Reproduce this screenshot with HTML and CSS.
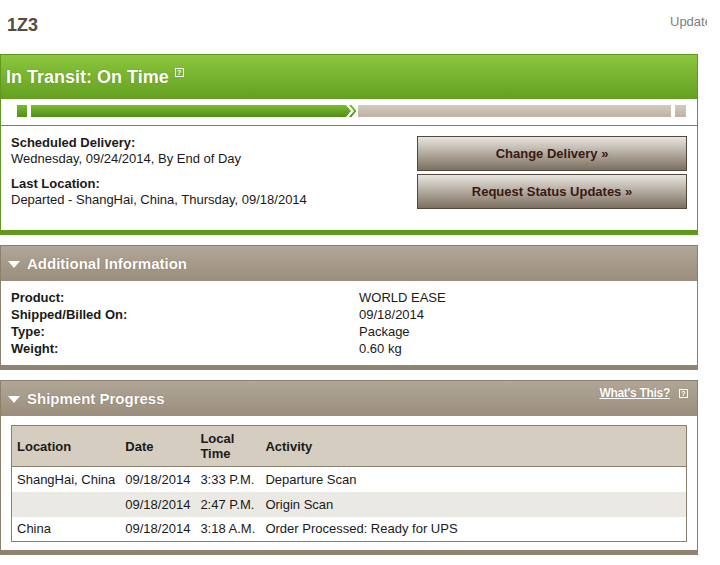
FILE: index.html
```html
<!DOCTYPE html>
<html>
<head>
<meta charset="utf-8">
<link rel="stylesheet" href="styles.css">
</head>
<body>
<div class="page">
  <div class="topbar">
    <h1 class="tracking">1Z3</h1>
    <span class="updates">Updates</span>
  </div>

  <section class="status-panel">
    <div class="status-head">
      <span class="status-title">In Transit: On Time</span>
      <span class="help help-light">?</span>
    </div>
    <div class="progress-row">
      <span class="seg seg-start"></span>
      <span class="seg seg-done"></span>
      <svg class="chev" width="16" height="16" viewBox="0 0 16 16">
        <defs>
          <linearGradient id="g" x1="0" y1="0" x2="0" y2="1">
            <stop offset="0" stop-color="#7dbd35"/>
            <stop offset="1" stop-color="#4e8e15"/>
          </linearGradient>
        </defs>
        <path d="M0 2 L3 2 L8 8 L3 14 L0 14 Z" fill="url(#g)"/>
        <path d="M5 1.5 L8.5 1.5 L14 8 L8.5 14.5 L5 14.5 L10.5 8 Z" fill="url(#g)" stroke="#fff" stroke-width="1"/>
      </svg>
      <span class="seg seg-todo"></span>
      <span class="seg seg-end"></span>
    </div>
    <div class="status-body">
      <div class="status-info">
        <div class="info-block">
          <div class="info-label">Scheduled Delivery:</div>
          <div class="info-value">Wednesday, 09/24/2014, By End of Day</div>
        </div>
        <div class="info-block">
          <div class="info-label">Last Location:</div>
          <div class="info-value">Departed - ShangHai, China, Thursday, 09/18/2014</div>
        </div>
      </div>
      <div class="actions">
        <button class="btn">Change Delivery »</button>
        <button class="btn">Request Status Updates »</button>
      </div>
    </div>
  </section>

  <section class="panel">
    <div class="panel-head">
      <span class="tri"></span>
      <span class="panel-title">Additional Information</span>
    </div>
    <div class="panel-body details">
      <div class="dl-row"><span class="dt">Product:</span><span class="dd">WORLD EASE</span></div>
      <div class="dl-row"><span class="dt">Shipped/Billed On:</span><span class="dd">09/18/2014</span></div>
      <div class="dl-row"><span class="dt">Type:</span><span class="dd">Package</span></div>
      <div class="dl-row"><span class="dt">Weight:</span><span class="dd">0.60 kg</span></div>
    </div>
  </section>

  <section class="panel">
    <div class="panel-head">
      <span class="tri"></span>
      <span class="panel-title">Shipment Progress</span>
      <span class="whats"><a href="#" class="whats-link">What's This?</a><span class="help help-sm">?</span></span>
    </div>
    <div class="panel-body progress-body">
      <table class="scan-table">
        <thead>
          <tr>
            <th class="c-loc">Location</th>
            <th class="c-date">Date</th>
            <th class="c-time">Local<br>Time</th>
            <th>Activity</th>
          </tr>
        </thead>
        <tbody>
          <tr><td>ShangHai, China</td><td>09/18/2014</td><td>3:33 P.M.</td><td>Departure Scan</td></tr>
          <tr class="alt"><td></td><td>09/18/2014</td><td>2:47 P.M.</td><td>Origin Scan</td></tr>
          <tr><td>China</td><td>09/18/2014</td><td>3:18 A.M.</td><td>Order Processed: Ready for UPS</td></tr>
        </tbody>
      </table>
    </div>
  </section>
</div>
</body>
</html>
```

FILE: styles.css
```css
* { box-sizing: border-box; }
html, body { margin: 0; padding: 0; background: #fff; }
body {
  font-family: "Liberation Sans", Arial, sans-serif;
  font-size: 13px;
  color: #1a1a1a;
  overflow: hidden;
}
.page { width: 720px; }

.topbar {
  display: flex;
  justify-content: space-between;
  align-items: flex-start;
  height: 54px;
  padding: 14px 0 0 7px;
}
.tracking {
  margin: 0;
  font-size: 18px;
  font-weight: bold;
  color: #574b40;
  line-height: 22px;
}
.updates {
  width: 37px;
  overflow: hidden;
  white-space: nowrap;
  color: #7d7d7d;
  font-size: 13px;
  margin-right: 13px;
  line-height: 16px;
}

/* Status panel */
.status-panel {
  width: 698px;
  border: 1px solid #5f9a1f;
  border-bottom: 5px solid #5f9a1f;
}
.status-head {
  height: 44px;
  background: linear-gradient(#8cc63e, #63a020);
  display: flex;
  align-items: center;
  padding-left: 5px;
  padding-top: 1px;
}
.status-title {
  color: #fff;
  font-weight: bold;
  font-size: 18px;
  text-shadow: 0 0 1px rgba(40,70,0,.5);
}
.help {
  display: inline-flex;
  align-items: center;
  justify-content: center;
  width: 9px;
  height: 9px;
  border: 1px solid #fff;
  font-size: 7px;
  line-height: 7px;
  font-weight: bold;
  color: #fff;
}
.help-light { margin-left: 6px; margin-top: -10px; }
.help-sm { margin-left: 9px; margin-top: 1px; }

.progress-row {
  height: 27px;
  border-bottom: 1px solid #5f9a1f;
  display: flex;
  align-items: flex-start;
  padding: 6px 0 0 16px;
}
.seg { height: 12px; display: block; }
.seg-start { width: 10px; background: linear-gradient(#7aba32, #4f8f15); margin-right: 4px; }
.seg-done { width: 312px; background: linear-gradient(#7dbd35, #4e8e15); }
.chev { display: block; margin-top: -2px; margin-right: -1px; }
.seg-todo { width: 313px; background: linear-gradient(#d3cabd, #bdb3a4); }
.seg-end { width: 11px; background: linear-gradient(#d3cabd, #bdb3a4); margin-left: 4px; }

.status-body {
  display: flex;
  justify-content: space-between;
  padding: 9px 10px 13px 10px;
}
.info-block { margin-bottom: 9px; }
.info-label { font-weight: bold; line-height: 16px; }
.info-value { line-height: 16px; }
.actions {
  display: flex;
  flex-direction: column;
  gap: 3px;
  padding-top: 1px;
}
.btn {
  width: 270px;
  height: 35px;
  border: 1px solid #56483a;
  background: linear-gradient(#e8e5df, #7c6f5f);
  font-family: "Liberation Sans", Arial, sans-serif;
  font-size: 13px;
  font-weight: bold;
  color: #3b1810;
  padding: 0;
}

/* Brown panels */
.panel {
  width: 698px;
  margin-top: 10px;
  border: 1px solid #8c7f6c;
  border-bottom: 5px solid #908370;
}
.panel-head {
  height: 35px;
  background: linear-gradient(#b1a797, #9a8d7b);
  display: flex;
  align-items: center;
  padding-left: 7px;
}
.tri {
  width: 0; height: 0;
  border-left: 6px solid transparent;
  border-right: 6px solid transparent;
  border-top: 7px solid #fff;
  margin-right: 7px;
  margin-top: 1px;
}
.panel-title {
  color: #fff;
  font-weight: bold;
  font-size: 15px;
  text-shadow: 0 0 1px rgba(60,40,20,.5);
}
.whats {
  margin-left: auto;
  margin-right: 9px;
  align-self: flex-start;
  margin-top: 5px;
  display: flex;
  align-items: center;
}
.whats-link {
  color: #fff;
  font-weight: bold;
  font-size: 12px;
  letter-spacing: -0.3px;
  text-decoration: underline;
  text-shadow: 0 0 1px rgba(60,40,20,.4);
}

.details { padding: 8px 10px 8px 10px; }
.dl-row { display: flex; line-height: 17px; }
.dt { width: 348px; font-weight: bold; }

.progress-body { padding: 9px 10px 8px 10px; }
.scan-table {
  width: 676px;
  border-collapse: collapse;
  border: 1px solid #8c7f6c;
}
.scan-table th {
  background: #d5cdc0;
  text-align: left;
  font-weight: bold;
  height: 41px;
  padding: 0 5px;
  line-height: 15px;
  border-bottom: 1px solid #8c7f6c;
}
.scan-table td {
  height: 25px;
  padding: 0 5px;
  white-space: nowrap;
}
.scan-table tr.alt td { background: #ebe9e4; }
.c-loc { width: 107px; }
.c-date { width: 75px; }
.c-time { width: 65px; }
```
